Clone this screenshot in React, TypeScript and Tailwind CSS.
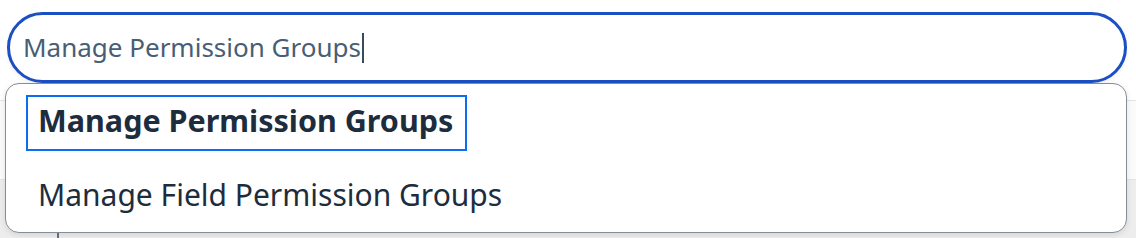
import React from "react";

const FONT = { fontFamily: '"Noto Sans", "Open Sans", Arial, sans-serif' };

const App = () => {
  return (
    <div className="relative w-[1136px] h-[238px] overflow-hidden bg-white" style={FONT}>
      {/* page behind the suggestions */}
      <div className="h-[100px] bg-white" />
      <div className="h-[80px] border-t border-b border-[#e4e4e4] bg-[#fbfbfb]" />
      <div className="h-[58px] bg-[#ededed]">
        <div className="ml-[57px] h-full w-[2px] bg-[#6a7280]" />
      </div>

      {/* search field */}
      <div className="absolute left-[7px] top-[12px] w-[1120px] h-[71px] rounded-full border-[3px] border-[#1b4fc4] bg-white flex items-center pl-[13px] shadow-[0_2px_4px_rgba(0,0,0,0.06)]">
        <span className="text-[26px] text-[#475e75]">Manage Permission Groups</span>
        <span className="ml-[1px] w-[2px] h-[30px] bg-[#3b4a5c]" />
      </div>

      {/* suggestion list */}
      <div className="absolute left-[5px] top-[83px] w-[1122px] h-[150px] rounded-[14px] border-[1.5px] border-[#868d96] bg-white shadow-[0_2px_6px_rgba(0,0,0,0.1)] pt-[10.5px] px-[20px]">
        <div className="inline-flex h-[56px] items-center border-2 border-[#0a6ef2] pl-[10px] pr-[12px]">
          <span className="text-[30.5px] leading-none font-bold text-[#1d2d3e] -mt-[4px]">Manage Permission Groups</span>
        </div>
        <div className="mt-[16px] flex h-[56px] items-center px-[12px]">
          <span className="text-[30px] leading-none text-[#1d2d3e]">Manage Field Permission Groups</span>
        </div>
      </div>
    </div>
  );
};

export default App;
